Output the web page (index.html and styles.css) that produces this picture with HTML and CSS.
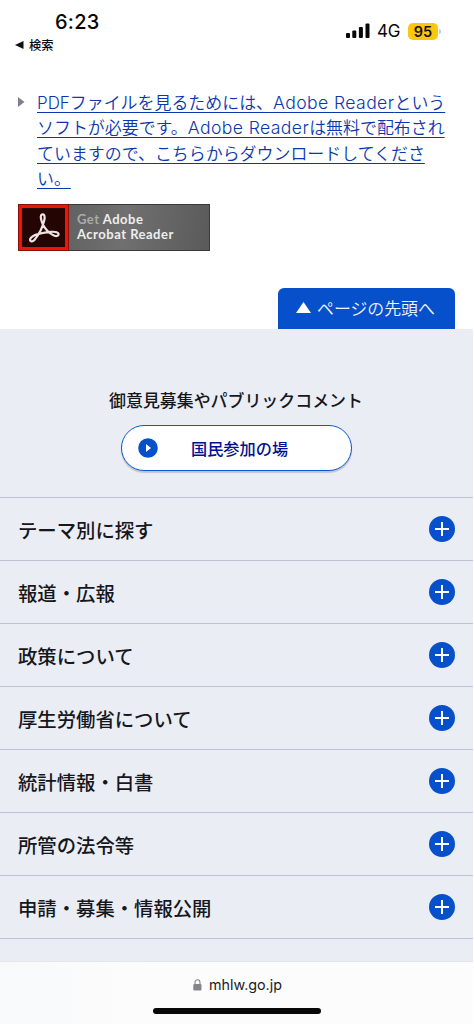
FILE: index.html
```html
<!DOCTYPE html>
<html lang="ja">
<head>
<meta charset="utf-8">
<title>mhlw.go.jp</title>
<link rel="stylesheet" href="styles.css">
</head>
<body>
<div class="screen">
  <header class="status">
    <div class="status-left">
      <div class="clock">6:23</div>
      <div class="back"><svg width="9" height="8" viewBox="0 0 9 8"><path d="M0 4 8.5 0V8Z" fill="#111"/></svg><span>検索</span></div>
    </div>
    <div class="status-right">
      <svg class="signal" width="24" height="16" viewBox="0 0 24 16" fill="#080808"><rect x="0" y="10" width="4" height="5" rx="1"/><rect x="6.3" y="7.4" width="4" height="7.6" rx="1"/><rect x="12.9" y="4" width="4" height="11" rx="1"/><rect x="19.5" y="0.5" width="4" height="14.5" rx="1"/></svg>
      <span class="network">4G</span>
      <span class="battery">95</span><span class="battery-tip"></span>
    </div>
  </header>
  <main>
    <section class="pdf">
      <svg class="bullet" width="7" height="10" viewBox="0 0 7 10"><path d="M0 0 6.5 5 0 10Z" fill="#7b818d"/></svg>
      <a class="pdf-link"><span class="line">PDFファイルを見るためには、<span class="latin">Adobe Reader</span>という</span><span class="line">ソフトが必要です。<span class="latin">Adobe Reader</span>は無料で配布され</span><span class="line">ていますので、こちらからダウンロードしてくださ</span><span class="line">い。</span></a>
    </section>
    <a class="adobe">
      <span class="adobe-mark"><svg width="32" height="32" viewBox="0 0 32 32" fill="none" stroke="#eee4e2" stroke-width="2.2" stroke-linecap="round" stroke-linejoin="round"><path d="M14.2 2.4C16.7 1.5 17 5.6 16.2 8.6C14.8 14.5 10.5 23.2 6.4 28C4.2 30.5 1.2 29.2 2.3 26.8C4.1 22.8 14.2 20.7 22.8 19.9C27.5 19.4 31.2 20.5 30.5 22.7C29.4 26 23 22.7 19.3 18.7C15.5 14.6 13.2 9.1 12.8 5.3C12.7 3.8 13.2 2.7 14.2 2.4Z"/></svg></span>
      <span class="adobe-text"><span><i class="get">Get</i> Adobe</span><span>Acrobat Reader</span></span>
    </a>
    <a class="page-top"><svg width="15" height="11" viewBox="0 0 15 11"><path d="M7.5 0 15 11H0Z" fill="#fff"/></svg><span>ページの先頭へ</span></a>
    <footer class="site-footer">
      <section class="comment">
        <p>御意見募集やパブリックコメント</p>
        <a class="join"><svg width="20" height="20" viewBox="0 0 20 20"><circle cx="10" cy="10" r="9.8" fill="#0750cc"/><path d="M8 6 13 10 8 14Z" fill="#fff"/></svg><span>国民参加の場</span></a>
      </section>
      <nav>
        <a class="row"><span>テーマ別に探す</span><i class="plus"></i></a>
        <a class="row"><span>報道・広報</span><i class="plus"></i></a>
        <a class="row"><span>政策について</span><i class="plus"></i></a>
        <a class="row"><span>厚生労働省について</span><i class="plus"></i></a>
        <a class="row"><span>統計情報・白書</span><i class="plus"></i></a>
        <a class="row"><span>所管の法令等</span><i class="plus"></i></a>
        <a class="row"><span>申請・募集・情報公開</span><i class="plus"></i></a>
      </nav>
    </footer>
  </main>
  <div class="browser-bar">
    <div class="address"><svg width="9" height="12" viewBox="0 0 9 12"><path d="M2 5.5V3.6a2.5 2.8 0 0 1 5 0V5.5" fill="none" stroke="#85858b" stroke-width="1.1"/><rect x="0.3" y="5" width="8.2" height="6.5" rx="1.1" fill="#85858b"/></svg><span>mhlw.go.jp</span></div>
    <div class="home"></div>
  </div>
</div>
</body>
</html>
```
FILE: styles.css
```css
* { box-sizing: border-box; }
body { margin: 0; background: #fff; font-family: Inter, "Noto Sans CJK JP", sans-serif; color: #15171c; }
svg { display: block; flex: none; }
i { font-style: normal; }
.screen { width: 473px; height: 1024px; display: flex; flex-direction: column; overflow: hidden; }
.status { height: 90px; display: flex; justify-content: space-between; flex: none; }
.status-left { padding: 10px 0 0 15px; }
.clock { padding-left: 40px; font-size: 20px; line-height: 24px; font-weight: 500; letter-spacing: .25px; color: #080808; }
.back { display: flex; align-items: center; gap: 5px; height: 22px; font: 500 12.3px/22px "Noto Sans CJK JP", sans-serif; color: #080808; }
.status-right { display: flex; align-items: center; height: 18px; margin: 22px 32px 0 0; }
.signal { margin-right: 7px; }
.network { width: 31px; font-size: 17px; line-height: 18px; letter-spacing: -.3px; color: #080808; }
.battery { width: 30px; height: 17px; border-radius: 5px; background: #fac70d; font-size: 14.5px; line-height: 17px; font-weight: 600; text-align: center; color: #161000; }
.battery-tip { width: 2px; height: 5px; margin-left: 1px; border-radius: 0 2px 2px 0; background: #ccc; }
.pdf { display: flex; padding-left: 18px; height: 114px; }
.bullet { margin: 7px 12px 0 0; }
.pdf-link { width: 420px; padding-top: 1px; font: 350 16.95px/25.4px Inter, "Noto Sans CJK JP", sans-serif; color: #0b37ae; white-space: nowrap; }
.line { display: table; height: 25.4px; text-decoration: underline; text-decoration-thickness: 1px; text-underline-offset: 3px; text-decoration-skip-ink: none; }
.latin { font-size: 17.6px; line-height: 20px; letter-spacing: .4px; }
.adobe { display: flex; width: 192px; height: 47px; margin-left: 18px; border: 1px solid #393939; background: linear-gradient(100deg, #555, #707070 55%, #5a5a5a); }
.adobe-mark { width: 49px; height: 45px; border: 3px solid #ee1507; outline: 1px solid #8b1009; background: #250504; display: flex; align-items: center; justify-content: center; flex: none; }
.adobe-text { display: flex; flex-direction: column; padding: 7px 0 0 9px; font: 700 13px/15px Lato, sans-serif; letter-spacing: .5px; color: #eee; white-space: nowrap; }
.get { color: #aaa; }
.page-top { display: flex; align-items: center; width: 177px; height: 41px; margin: 37px 0 0 278px; padding: 0 0 2px 18px; gap: 6px; border-radius: 6px 6px 0 0; background: #0750cc; color: #eef4ff; font: 350 16.9px/39px "Noto Sans CJK JP", sans-serif; white-space: nowrap; }
.site-footer { height: 632px; background: #eaedf3; }
.comment { height: 168px; padding-top: 58px; text-align: center; }
.comment p { margin: 0; padding-right: 1px; font: 500 16.93px/26px "Noto Sans CJK JP", sans-serif; white-space: nowrap; }
.join { display: flex; align-items: center; width: 231px; height: 46px; margin: 12px auto 0 121px; padding-left: 16px; gap: 33px; border: 1.5px solid #0b58ce; border-radius: 23px; background: #fff; box-shadow: 0 2px 1px #c3c5cb; color: #00118f; font: 500 16.2px/26px "Noto Sans CJK JP", sans-serif; }
.row { display: flex; justify-content: space-between; align-items: center; height: 63.05px; padding: 2px 18px 0; border-top: 1px solid #bec3cf; font: 500 19.35px/28px "Noto Sans CJK JP", sans-serif; }
.row:last-child { height: 63.6px; border-bottom: 1px solid #bec3cf; }
.plus { width: 26px; height: 26px; margin-top: -2px; border-radius: 50%; background: linear-gradient(#fff, #fff) center / 14px 2px no-repeat, linear-gradient(#fff, #fff) center / 2px 14px no-repeat, #0750cc; }
.browser-bar { height: 63px; flex: none; background: linear-gradient(90deg, #f8f9fb, #fcfcfc 30%); border-top: 1px solid #e5e6e9; }
.address { display: flex; align-items: center; justify-content: center; gap: 7px; height: 46px; padding-left: 2px; font: 400 14.3px/20px Inter, sans-serif; color: #202023; }
.home { width: 168px; height: 6px; margin: 0 auto; border-radius: 3px; background: #080808; }
```
